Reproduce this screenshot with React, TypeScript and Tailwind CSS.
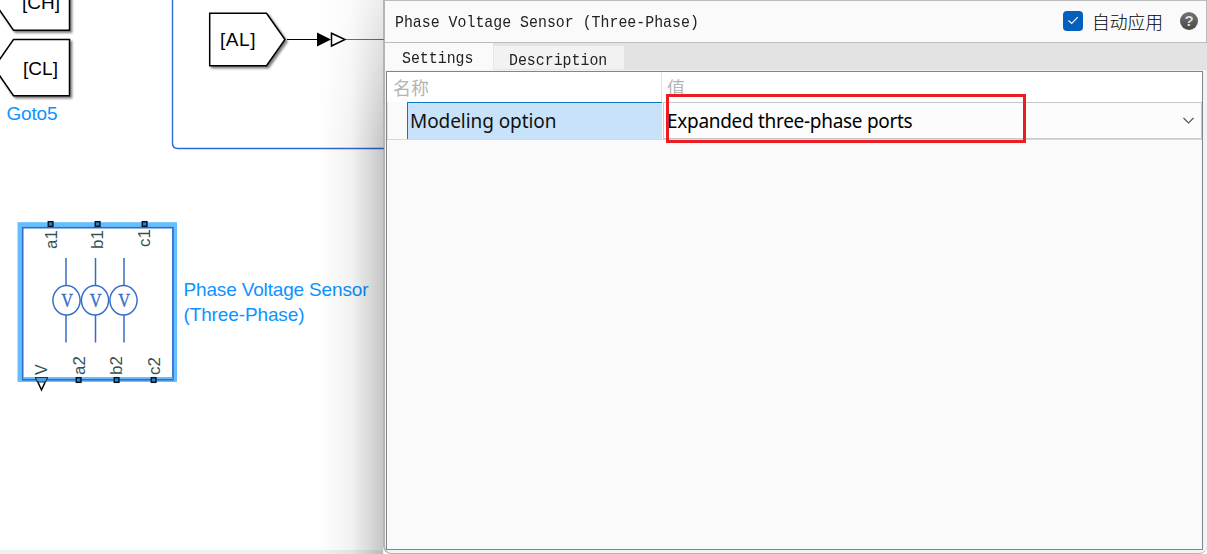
import React from "react";

const meters = [
  { x: 66, cx: 66.5 },
  { x: 95.5, cx: 95 },
  { x: 124, cx: 123.5 },
];

const ports = [
  { label: "a1", x: 50.5, y: 224, tx: 57, ty: 249 },
  { label: "b1", x: 97.5, y: 224, tx: 103, ty: 249 },
  { label: "c1", x: 144.5, y: 224, tx: 150, ty: 247 },
  { label: "a2", x: 78.5, y: 380, tx: 85, ty: 375 },
  { label: "b2", x: 116.5, y: 380, tx: 122, ty: 375 },
  { label: "c2", x: 153.5, y: 380, tx: 160, ty: 375 },
];

function Diagram() {
  return (
    <svg
      width="384"
      height="554"
      viewBox="0 0 384 554"
      className="block font-['Liberation_Sans',sans-serif]"
    >
      <defs>
        <filter id="drop" x="-20%" y="-20%" width="150%" height="150%">
          <feDropShadow dx="2" dy="2" stdDeviation="1.3" floodColor="#000" floodOpacity="0.5" />
        </filter>
      </defs>
      <path d="M172.5 -5V143Q172.5 148.5 178 148.5H400" fill="none" stroke="#2e6bd0" strokeWidth="1.4" />

      <g fill="#fff" stroke="#000" strokeWidth="1.5" filter="url(#drop)">
        <path d="M13.5 -26H69.5V30.3H13.5L-6 2Z" />
        <path d="M13.5 39.6H69.5V95.7H13.5L-6 67.5Z" />
        <path d="M209.7 13.3H266.5L285 39.5L266.5 65.8H209.7Z" />
      </g>
      <g fill="#000" fontSize="19">
        <text x="22" y="9" textLength="38">[CH]</text>
        <text x="23" y="75" textLength="35">[CL]</text>
        <text x="220" y="46" textLength="35.5">[AL]</text>
      </g>
      <text x="6.5" y="120" fontSize="19" fill="#0c93ff" textLength="51">Goto5</text>

      <path d="M287 39.5H318" stroke="#000" strokeWidth="1" />
      <path d="M317 32.5L331 39.5L317 46.5Z" fill="#000" />
      <path d="M331.5 33.2L345 39.5L331.5 46Z" fill="#fff" stroke="#000" strokeWidth="1.5" />
      <path d="M346 39.5H384" stroke="#985c5c" strokeWidth="1" />

      <rect x="20" y="224.7" width="154.5" height="154.8" fill="#fff" stroke="#65bfff" strokeWidth="5" />
      <rect x="22.7" y="227.7" width="150.3" height="152" fill="none" stroke="#326bc9" strokeWidth="1.6" />
      <path d="M23 378.2H173" stroke="#65bfff" strokeWidth="1.3" />

      <g fill="none" stroke="#376dc8" strokeWidth="1.5">
        {meters.map((m) => (
          <g key={m.x}>
            <path d={`M${m.x} 258V285.5M${m.x} 315V342.5`} />
            <ellipse cx={m.cx} cy="300.3" rx="13.6" ry="14.7" fill="#fff" />
          </g>
        ))}
      </g>
      <g fill="#376dc8" fontSize="19" textAnchor="middle" className="font-['Liberation_Serif',serif]" stroke="#376dc8" strokeWidth="0.3">
        {meters.map((m) => (
          <text key={m.x} transform={`translate(${m.cx + 0.7} 307) scale(0.86 1)`}>V</text>
        ))}
      </g>

      {ports.map((p) => (
        <g key={p.label}>
          <rect x={p.x - 2.2} y={p.y - 2.3} width="4.6" height="4.6" fill="#2d83c6" stroke="#05182b" strokeWidth="1.5" />
          <text transform={`translate(${p.tx} ${p.ty}) rotate(-90)`} fontSize="17" fill="#345252">{p.label}</text>
        </g>
      ))}
      <text transform="translate(47 375) rotate(-90)" fontSize="16" fill="#345252">V</text>
      <path d="M36 378H47L41.5 390Z" fill="#fff" stroke="#000" strokeWidth="1.5" />
      <path d="M35.5 377.5H47.5L45.5 382H37.5Z" fill="#4a9fdd" stroke="#103b66" strokeWidth="1" />

      <g fill="#0c93ff" fontSize="19">
        <text x="183.5" y="296" textLength="185">Phase Voltage Sensor</text>
        <text x="183.5" y="321" textLength="121">(Three-Phase)</text>
      </g>
      <rect x="0" y="550" width="384" height="4" fill="#f0f0f0" />
    </svg>
  );
}

function Mono({ children }: { children: React.ReactNode }) {
  return (
    <span className="inline-block origin-center scale-y-[1.14] whitespace-pre font-['Liberation_Mono',monospace] text-[14.9px] leading-5 text-[#222]">
      {children}
    </span>
  );
}

function Header() {
  return (
    <header className="flex h-[43px] shrink-0 items-center border-t border-b border-r border-[#bcbcbc] bg-[#fafafa] pl-[10px] pr-2">
      <Mono>Phase Voltage Sensor (Three-Phase)</Mono>
      <div className="ml-auto flex items-center">
        <span className="relative -top-px flex size-5 items-center justify-center rounded-[4px] bg-[#0560bd]">
          <svg width="12" height="9" viewBox="0 0 12 9" fill="none" stroke="#fff" strokeWidth="1.1">
            <path d="M1.5 4.5L4.7 7.5L10.8 1.2" />
          </svg>
        </span>
        <span className="relative -top-px ml-[9px] w-[72px] whitespace-nowrap font-['Noto_Sans_CJK_SC',sans-serif] text-[17.8px] font-light leading-6 text-black">
          自动应用
        </span>
        <span className="relative -top-px ml-4 flex size-[18px] items-center justify-center rounded-full bg-linear-to-b from-[#737373] to-[#484848] font-['Liberation_Sans',sans-serif] text-[15px] font-bold leading-none text-[#dedede]">
          ?
        </span>
      </div>
    </header>
  );
}

function Tabs() {
  return (
    <nav className="flex h-[27px] shrink-0 bg-[#e3e3e3]">
      <div className="flex w-[108px] items-center bg-[#fafafa] pl-[17px] pt-[3px]">
        <Mono>Settings</Mono>
      </div>
      <div className="mt-[3px] flex w-[131px] items-center border-l border-b border-[#e6e6e6] bg-[#f2f2f2] pl-[15px] pt-[4px]">
        <Mono>Description</Mono>
      </div>
    </nav>
  );
}

function PropertyTable() {
  return (
    <main className="ml-px mr-1 mt-px flex h-[479px] flex-col border border-[#81848a] bg-[#fafafa]">
      <div className="flex h-[30px] shrink-0 bg-white font-['Noto_Sans_CJK_SC',sans-serif] text-[18px] leading-[31px] text-[#b4b4b4]">
        <div className="w-[275px] border-r border-[#e2e2e2] pl-[6px]">名称</div>
        <div className="pl-[5px]">值</div>
      </div>
      <div className="flex h-[38px] shrink-0 border-b border-[#d8d8d8] font-['Noto_Sans',sans-serif] text-[19px] text-[#111]">
        <div className="w-5 border-l border-[#e0e0e0]" />
        <div className="w-[255px] border-t border-l border-[#0878cc] bg-[#c8e3f9] pl-[2px] leading-[37px]">
          <span className="whitespace-nowrap tracking-[-0.07px]">Modeling option</span>
        </div>
        <div className="ml-px flex h-[37px] flex-1 items-center border border-[#c8c8c8] bg-[#fcfcfc] pl-[3px] pr-[6px]">
          <span className="whitespace-nowrap pt-[2px] tracking-[-0.3px] text-black">Expanded three-phase ports</span>
          <svg className="ml-auto" width="13" height="8" viewBox="0 0 13 8" fill="none" stroke="#555" strokeWidth="1.2">
            <path d="M1.5 1L6.5 6L11.5 1" />
          </svg>
        </div>
      </div>
    </main>
  );
}

export default function App() {
  return (
    <div className="relative flex h-[554px] w-[1207px] overflow-hidden bg-white">
      <div className="relative w-[383px] shrink-0">
        <Diagram />
        <div className="absolute inset-y-0 right-0 w-[64px] bg-linear-to-r from-transparent via-black/5 to-black/22 mask-[linear-gradient(to_bottom,rgba(0,0,0,0.35),black_140px)]" />
      </div>
      <section className="flex h-[554px] min-w-0 flex-1 flex-col overflow-hidden rounded-b-[8px] border-l-2 border-b border-[#b4b4b4] bg-[#f3f3f3]">
        <Header />
        <Tabs />
        <PropertyTable />
      </section>
      <div className="absolute left-[666px] top-[94px] h-[49px] w-[360px] border-3 border-[#ed1c24]" />
    </div>
  );
}
